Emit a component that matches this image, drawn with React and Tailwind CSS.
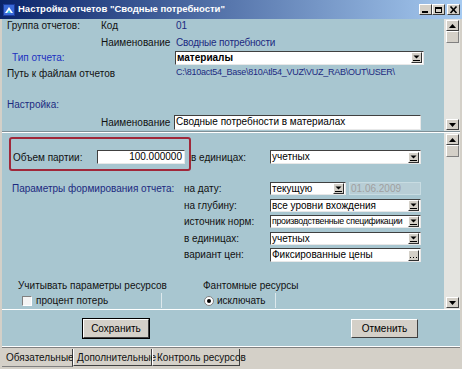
import React from "react";

function DropBtn({ dots }) {
  return (
    <div className="w-[11px] h-[11px] mr-[1px] shrink-0 bg-[#d4d0c8] border border-t-white border-l-white border-r-[#303030] border-b-[#303030] flex items-center justify-center">
      {dots ? (
        <svg width="9" height="9" viewBox="0 0 9 9">
          <rect x="1" y="6" width="1" height="1" fill="#000" />
          <rect x="4" y="6" width="1" height="1" fill="#000" />
          <rect x="7" y="6" width="1" height="1" fill="#000" />
        </svg>
      ) : (
        <svg width="9" height="9" viewBox="0 0 9 9">
          <path d="M1.5 2.5 H7.5 L4.5 5.5 Z" fill="#000" />
          <rect x="1" y="7" width="7" height="1" fill="#000" />
        </svg>
      )}
    </div>
  );
}

function Field({ w, children, drop, dots, bold, right, grey, tight, className = "" }) {
  return (
    <div
      className={`h-[14px] shrink-0 bg-white border border-t-[#404040] border-l-[#404040] border-b-[#e8e8e8] border-r-[#e8e8e8] flex items-center ${className}`}
      style={{ width: w }}
    >
      <span
        className={`flex-1 min-w-0 pl-[1px] whitespace-nowrap leading-none ${tight ? "text-[8.8px] tracking-[-0.3px]" : "overflow-hidden"} ${bold ? "font-bold" : ""} ${right ? "text-right pr-[2px]" : ""} ${grey ? "text-[#a0a0a0]" : "text-black"}`}
      >
        {children}
      </span>
      {drop && <DropBtn dots={dots} />}
    </div>
  );
}

function ArrowBtn({ up }) {
  return (
    <div className="w-[13px] h-[11px] mx-auto bg-[#d4d0c8] border border-t-white border-l-white border-r-[#404040] border-b-[#404040] flex items-center justify-center">
      <svg width="7" height="4" viewBox="0 0 7 4">
        {up ? <path d="M0 4 H7 L3.5 0 Z" fill="#000" /> : <path d="M0 0 H7 L3.5 4 Z" fill="#000" />}
      </svg>
    </div>
  );
}

function Thumb() {
  return <div className="w-[13px] h-[12px] mx-auto bg-[#d4d0c8] border border-t-white border-l-white border-r-[#808080] border-b-[#808080]" />;
}

function TitleBtn({ kind }) {
  return (
    <div className="w-[13px] h-[11px] bg-[#d4d0c8] border border-t-white border-l-white border-r-[#404040] border-b-[#404040] flex items-center justify-center">
      <svg width="9" height="8" viewBox="0 0 9 8">
        {kind === "min" && <rect x="1" y="5" width="6" height="2" fill="#000" />}
        {kind === "max" && (
          <g fill="none" stroke="#000">
            <rect x="1.5" y="1.5" width="6" height="5" />
            <line x1="1" y1="2.5" x2="8" y2="2.5" />
          </g>
        )}
        {kind === "close" && (
          <g stroke="#000" strokeWidth="1.6">
            <line x1="1.5" y1="0.5" x2="7.5" y2="7" />
            <line x1="7.5" y1="0.5" x2="1.5" y2="7" />
          </g>
        )}
      </svg>
    </div>
  );
}

export default function App() {
  return (
    <div className="w-[462px] h-[369px] bg-[#d4d0c8] flex flex-col overflow-hidden relative font-['Liberation_Sans',Arial,sans-serif] text-[10px] text-[#111]">
      {/* Title bar */}
      <div className="h-[19px] shrink-0 flex items-center bg-[linear-gradient(to_right,#0a246a,#a6caf0)] pl-[3px] pr-[2px]">
        <svg width="12" height="12" viewBox="0 0 12 12" className="shrink-0">
          <rect x="0" y="0" width="12" height="12" fill="#1c3c9c" />
          <rect x="1" y="1" width="10" height="10" fill="#3a6ad8" />
          <path d="M2 9 L6 3 L10 9 Z" fill="#ffffff" />
          <path d="M4 9 L6 6 L8 9 Z" fill="#38c0e0" />
        </svg>
        <span className="ml-[3px] text-white font-bold text-[9.5px] whitespace-nowrap">
          Настройка отчетов "Сводные потребности"
        </span>
        <div className="ml-auto flex items-center">
          <TitleBtn kind="min" />
          <TitleBtn kind="max" />
          <div className="w-[2px]" />
          <TitleBtn kind="close" />
        </div>
      </div>

      {/* Body */}
      <div className="mx-[2px] h-[328px] shrink-0 bg-[#a8c6d0] flex flex-col border-b border-b-white">
        {/* Top panel */}
        <div className="h-[112px] flex">
          <div className="flex-1 flex flex-col">
            <div className="flex h-[13px] items-center pl-[5px]">
              <span className="w-[94px]">Группа отчетов:</span>
              <span className="w-[75px]">Код</span>
              <span className="text-[#1c2a80]">01</span>
            </div>
            <div className="flex h-[14px] mt-[3px] items-center pl-[99px]">
              <span className="w-[75px]">Наименование</span>
              <span className="text-[#1c2a80] tracking-[-0.2px]">Сводные потребности</span>
            </div>
            <div className="flex h-[15px] mt-[1px] items-center pl-[10px]">
              <span className="w-[163px] text-[#2030c0]">Тип отчета:</span>
              <Field w={249} drop bold>материалы</Field>
            </div>
            <div className="flex h-[14px] mt-[1px] items-center pl-[5px]">
              <span className="w-[169px]">Путь к файлам отчетов</span>
              <span className="text-[#1c2a80] whitespace-nowrap text-[9px] tracking-[-0.25px]">C:\810act54_Base\810Atl54_VUZ\VUZ_RAB\OUT\USER\</span>
            </div>
            <div className="flex h-[14px] mt-[17px] items-center pl-[5px]">
              <span className="text-[#1c2a80]">Настройка:</span>
            </div>
            <div className="flex h-[16px] mt-[3px] items-center pl-[99px]">
              <span className="w-[73px]">Наименование</span>
              <Field w={247} className="h-[15px]">Сводные потребности в материалах</Field>
            </div>
          </div>
          <div className="w-[16px] bg-[#e4e4e0] flex flex-col py-[1px]">
            <ArrowBtn up />
            <Thumb />
            <div className="flex-1" />
            <ArrowBtn />
          </div>
        </div>

        {/* separator */}
        <div className="h-[2px] border-t border-t-[#7f8f96] border-b border-b-white" />

        {/* Bottom panel */}
        <div className="h-[176px] flex relative">
          <div className="flex-1 flex flex-col">
            <div className="flex h-[14px] mt-[17px] items-center pl-[11px]">
              <span className="w-[84px]">Объем партии:</span>
              <Field w={88} right>100.000000</Field>
              <span className="w-[85px] pl-[6px]">в единицах:</span>
              <Field w={151} drop>учетных</Field>
            </div>
            <div className="flex mt-[18px] pl-[10px]">
              <div className="w-[172px] h-[13px] flex items-center text-[#1c2a80] whitespace-nowrap">Параметры формирования отчета:</div>
              <div className="w-[86px] flex flex-col whitespace-nowrap">
                <span className="h-[13px] flex items-center">на дату:</span>
                <span className="h-[13px] mt-[4px] flex items-center">на глубину:</span>
                <span className="h-[13px] mt-[3px] flex items-center">источник норм:</span>
                <span className="h-[13px] mt-[4px] flex items-center">в единицах:</span>
                <span className="h-[13px] mt-[3px] flex items-center">вариант цен:</span>
              </div>
              <div className="flex flex-col">
                <div className="flex gap-[3px]">
                  <Field w={76} drop className="!h-[13px]">текущую</Field>
                  <Field w={72} grey className="!h-[13px] !bg-[#b8ced6] !border-[#c8dce2]">01.06.2009</Field>
                </div>
                <Field w={151} drop className="!h-[13px] mt-[4px]">все уровни вхождения</Field>
                <Field w={151} drop tight className="!h-[13px] mt-[3px]">производственные спецификации</Field>
                <Field w={151} drop className="!h-[13px] mt-[4px]">учетных</Field>
                <Field w={151} drop dots className="!h-[14px] mt-[3px]">Фиксированные цены</Field>
              </div>
            </div>
            <div className="flex mt-[17px]">
              <div className="ml-[16px] w-[185px] flex flex-col">
                <span className="h-[13px] flex items-center">Учитывать параметры ресурсов</span>
                <div className="mt-[1px] w-[144px] h-[15px] border-r border-r-[#dde8ec] flex items-center pl-[4px]">
                  <div className="w-[10px] h-[10px] bg-[#f4f4f4] border border-t-[#808080] border-l-[#808080] border-b-white border-r-white" />
                  <span className="ml-[4px]">процент потерь</span>
                </div>
              </div>
              <div className="flex flex-col">
                <span className="h-[13px] flex items-center">Фантомные ресурсы</span>
                <div className="mt-[1px] w-[73px] h-[15px] border-r border-r-[#dde8ec] flex items-center pl-[1px]">
                  <div className="w-[10px] h-[10px] rounded-full bg-white border border-[#808080] flex items-center justify-center">
                    <div className="w-[4px] h-[4px] rounded-full bg-black" />
                  </div>
                  <span className="ml-[3px]">исключать</span>
                </div>
              </div>
            </div>
          </div>
          <div className="w-[16px] bg-[#e4e4e0] flex flex-col py-[1px]">
            <ArrowBtn up />
            <Thumb />
            <div className="flex-1" />
            <ArrowBtn />
          </div>
          {/* annotation */}
          <div className="absolute left-[7px] top-[4px] w-[182px] h-[34px] border-2 border-[#a0283a] rounded-[3px]" />
        </div>

        {/* separator */}
        <div className="h-[1px] bg-white" />

        {/* Buttons */}
        <div className="flex-1 flex items-center">
          <div className="ml-[80px] w-[68px] h-[21px] border border-black">
            <div className="w-full h-full bg-[#d4d0c8] border border-t-white border-l-white border-r-[#404040] border-b-[#404040] flex items-center justify-center text-black">
              Сохранить
            </div>
          </div>
          <div className="ml-[201px] w-[67px] h-[19px] bg-[#d4d0c8] border border-t-white border-l-white border-r-[#404040] border-b-[#404040] flex items-center justify-center text-black">
            Отменить
          </div>
        </div>
      </div>
      <div className="mx-[2px] h-[1px] bg-[#808080]" />

      {/* Tabs */}
      <div className="flex mt-[1px] h-[19px] pl-[2px] whitespace-nowrap">
        <div className="w-[71px] h-[18px] flex items-center pl-[4px] border-b border-b-[#808080] border-r border-r-[#404040]">
          Обязательные
        </div>
        <div className="w-[79px] h-[17px] flex items-center pl-[3px] border-l border-l-white border-r border-r-[#404040] border-b border-b-[#404040]">
          Дополнительные
        </div>
        <div className="w-[88px] h-[17px] flex items-center pl-[4px] border-l border-l-white border-r border-r-[#404040] border-b border-b-[#404040]">
          Контроль ресурсов
        </div>
      </div>
    </div>
  );
}
